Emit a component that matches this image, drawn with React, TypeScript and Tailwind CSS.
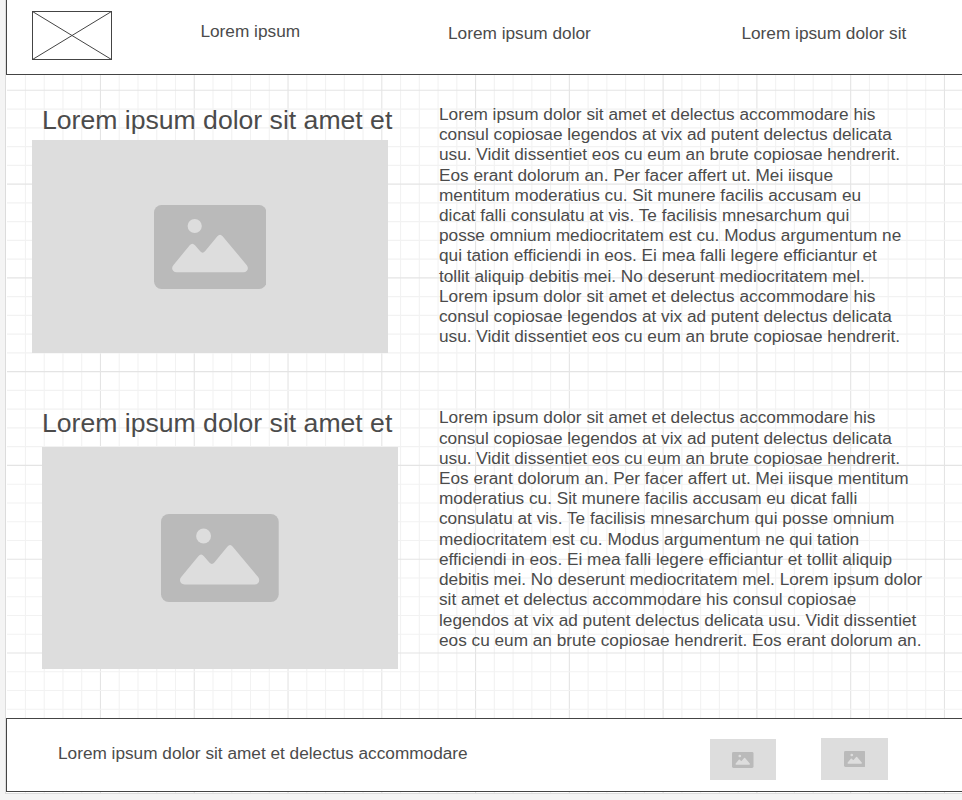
const firstText = [
  'Lorem ipsum dolor sit amet et delectus accommodare his',
  'consul copiosae legendos at vix ad putent delectus delicata',
  'usu. Vidit dissentiet eos cu eum an brute copiosae hendrerit.',
  'Eos erant dolorum an. Per facer affert ut. Mei iisque',
  'mentitum moderatius cu. Sit munere facilis accusam eu',
  'dicat falli consulatu at vis. Te facilisis mnesarchum qui',
  'posse omnium mediocritatem est cu. Modus argumentum ne',
  'qui tation efficiendi in eos. Ei mea falli legere efficiantur et',
  'tollit aliquip debitis mei. No deserunt mediocritatem mel.',
  'Lorem ipsum dolor sit amet et delectus accommodare his',
  'consul copiosae legendos at vix ad putent delectus delicata',
  'usu. Vidit dissentiet eos cu eum an brute copiosae hendrerit.',
];

const secondText = [
  'Lorem ipsum dolor sit amet et delectus accommodare his',
  'consul copiosae legendos at vix ad putent delectus delicata',
  'usu. Vidit dissentiet eos cu eum an brute copiosae hendrerit.',
  'Eos erant dolorum an. Per facer affert ut. Mei iisque mentitum',
  'moderatius cu. Sit munere facilis accusam eu dicat falli',
  'consulatu at vis. Te facilisis mnesarchum qui posse omnium',
  'mediocritatem est cu. Modus argumentum ne qui tation',
  'efficiendi in eos. Ei mea falli legere efficiantur et tollit aliquip',
  'debitis mei. No deserunt mediocritatem mel. Lorem ipsum dolor',
  'sit amet et delectus accommodare his consul copiosae',
  'legendos at vix ad putent delectus delicata usu. Vidit dissentiet',
  'eos cu eum an brute copiosae hendrerit. Eos erant dolorum an.',
];

function Grid() {
  const step = 18.755;
  const columns = Array.from({ length: 51 }, (_, i) => i + 1);
  const rows = Array.from({ length: 42 }, (_, i) => i);
  return (
    <svg className="absolute inset-0 h-full w-full" aria-hidden="true">
      {columns.map((i) => (
        <line key={`c${i}`} x1={i * step + 0.7} x2={i * step + 0.7} y1="0" y2="100%" stroke={i % 5 === 0 ? '#e4e4e4' : '#f2f2f2'} strokeWidth="1.1" />
      ))}
      {rows.map((i) => (
        <line key={`r${i}`} y1={i * step + 15.3} y2={i * step + 15.3} x1="1" x2="100%" stroke={i % 5 === 4 ? '#e4e4e4' : '#f2f2f2'} strokeWidth="1.1" />
      ))}
    </svg>
  );
}

function PictureIcon({ className }: { className: string }) {
  return (
    <svg viewBox="0 0 112.5 84" className={className} preserveAspectRatio="none">
      <rect width="112.5" height="84" rx="7.5" fill="#bababa" />
      <circle cx="40.7" cy="21" r="7.1" fill="#dddddd" />
      <path
        d="M19.3 60.2 L35.7 40.3 Q38.3 37.2 41 40.3 L46.2 46.3 Q48.6 49 51 46.3 L63.4 31.2 Q66 28.2 68.6 31.2 L92.8 60.2 C95.3 63.4 93.2 67.2 89.5 67.2 H22.5 C18.8 67.2 16.7 63.4 19.3 60.2 Z"
        fill="#dddddd"
      />
    </svg>
  );
}

function Paragraph({ lines }: { lines: string[] }) {
  return (
    <p className="text-[17.23px] leading-[20.22px] whitespace-nowrap">
      {lines.map((line, i) => (
        <span key={i} className="block">{line}</span>
      ))}
    </p>
  );
}

export default function App() {
  return (
    <div className="h-[800px] w-[962px] overflow-hidden bg-[#f4f4f4] pl-[5px] font-['Liberation_Sans',Arial,sans-serif] text-[#4b4b4b]">
      <div className="relative h-[794px] border-b border-l border-[#dcdcdc] bg-white">
        <Grid />
        <div className="relative flex h-full flex-col">
          <header className="flex h-[75px] shrink-0 border-b border-l border-[#444] bg-white pl-[25px] text-[17.25px] leading-5 whitespace-nowrap">
            <svg className="mt-[11px] h-[49px] w-20 shrink-0" viewBox="0 0 80 49" fill="none" stroke="#444">
              <rect x=".5" y=".5" width="79" height="48" />
              <path d="M.5 .5 79.5 48.5M79.5 .5 .5 48.5" />
            </svg>
            <nav className="flex">
              <a className="mt-[21px] ml-[88.4px] w-[247.6px]">Lorem ipsum</a>
              <a className="mt-[23px] w-[293.4px]">Lorem ipsum dolor</a>
              <a className="mt-[23px]">Lorem ipsum dolor sit</a>
            </nav>
          </header>

          <main className="flex h-[643px] shrink-0 flex-col">
            <section className="flex h-[303px] shrink-0">
              <div className="w-[433px] shrink-0 pt-[29px]">
                <h2 className="h-9 pl-[36px] text-[26.6px] leading-8 whitespace-nowrap">Lorem ipsum dolor sit amet et</h2>
                <div className="ml-[26px] flex h-[213px] w-[356px] items-center justify-center bg-[#ddd]">
                  <PictureIcon className="h-[84px] w-[112.5px]" />
                </div>
              </div>
              <div className="pt-[28.9px]"><Paragraph lines={firstText} /></div>
            </section>
            <section className="flex h-[340px] shrink-0">
              <div className="w-[433px] shrink-0 pt-[29px]">
                <h2 className="h-10 pl-[36px] text-[26.6px] leading-8 whitespace-nowrap">Lorem ipsum dolor sit amet et</h2>
                <div className="ml-9 flex h-[222px] w-[356px] items-center justify-center bg-[#ddd]">
                  <PictureIcon className="h-[88px] w-[117.7px]" />
                </div>
              </div>
              <div className="pt-[29.4px]"><Paragraph lines={secondText} /></div>
            </section>
          </main>

          <footer className="flex h-[74px] shrink-0 border-y border-l border-[#444] bg-white pl-[51px]">
            <p className="w-[652px] pt-6 text-[17.23px] leading-5">Lorem ipsum dolor sit amet et delectus accommodare</p>
            <div className="mt-5 flex h-[41px] w-[66px] items-center justify-center bg-[#ddd]">
              <PictureIcon className="h-4 w-[21.5px]" />
            </div>
            <div className="mt-[19px] ml-[45px] flex h-[42px] w-[67px] items-center justify-center bg-[#ddd]">
              <PictureIcon className="h-4 w-[21.5px]" />
            </div>
          </footer>
        </div>
      </div>
    </div>
  );
}
